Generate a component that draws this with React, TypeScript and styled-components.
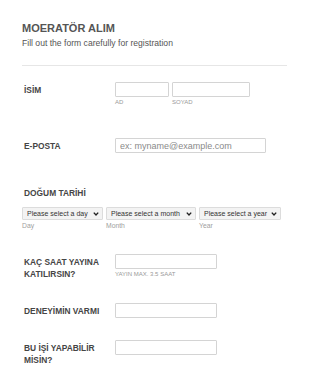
import React from 'react'
import styled, { createGlobalStyle } from 'styled-components'

const GlobalStyle = createGlobalStyle`
  html, body {
    margin: 0;
    padding: 0;
    background: #ffffff;
  }
  body {
    font-family: 'Liberation Sans', Arial, sans-serif;
  }
`

const Page = styled.div`
  display: flex;
  flex-direction: column;
  padding: 21px 0 0 22px;
  width: 288px;
  box-sizing: border-box;
`

const Header = styled.div`
  display: flex;
  flex-direction: column;
  width: 265px;
  padding-bottom: 16px;
  border-bottom: 1px solid #e6e6e6;
`

const Title = styled.div`
  font-size: 11px;
  font-weight: 700;
  line-height: 14px;
  color: #555555;
`

const Subtitle = styled.div`
  margin-top: 2px;
  font-size: 8.6px;
  line-height: 12px;
  color: #555555;
`

const Row = styled.div<{ $top: number }>`
  display: flex;
  flex-direction: row;
  align-items: flex-start;
  margin-top: ${p => p.$top}px;
`

const Stack = styled.div<{ $top: number }>`
  display: flex;
  flex-direction: column;
  margin-top: ${p => p.$top}px;
`

const Label = styled.div`
  width: 93px;
  padding-left: 2px;
  padding-top: 3px;
  box-sizing: border-box;
  font-size: 8.4px;
  font-weight: 700;
  line-height: 11.5px;
  color: #454545;
`

const FieldGroup = styled.div`
  display: flex;
  flex-direction: row;
  gap: 3px;
`

const Field = styled.div`
  display: flex;
  flex-direction: column;
`

const TextInput = styled.input<{ $w: number }>`
  display: block;
  width: ${p => p.$w}px;
  height: 15px;
  box-sizing: border-box;
  margin: 0;
  padding: 0 4px;
  border: 1px solid #d4d4d4;
  border-radius: 1px;
  background: #ffffff;
  font-family: 'Liberation Sans', Arial, sans-serif;
  font-size: 9px;
  color: #555555;
  outline: none;
  &::placeholder {
    color: #8a8a8a;
  }
`

const SubLabel = styled.div`
  margin-top: 2px;
  font-size: 6px;
  line-height: 7px;
  color: #999999;
`

const SelectWrap = styled.div<{ $w: number }>`
  position: relative;
  width: ${p => p.$w}px;
  height: 13px;
`

const Select = styled.select`
  display: block;
  appearance: none;
  -webkit-appearance: none;
  width: 100%;
  height: 13px;
  box-sizing: border-box;
  margin: 0;
  padding: 0 0 0 4px;
  border: 1px solid #dcdcdc;
  border-radius: 1px;
  background: #f3f3f3;
  font-family: 'Liberation Sans', Arial, sans-serif;
  font-size: 7px;
  line-height: 11px;
  color: #333333;
  outline: none;
`

const Chevron = styled.svg`
  position: absolute;
  right: 4px;
  top: 50%;
  transform: translateY(-50%);
  width: 6px;
  height: 5px;
  pointer-events: none;
`

const DateLabel = styled.div`
  padding-left: 2px;
  font-size: 8.4px;
  font-weight: 700;
  line-height: 10px;
  color: #454545;
`

const DateRow = styled.div`
  display: flex;
  flex-direction: row;
  gap: 3px;
  margin-top: 9px;
`

const DateSub = styled.div`
  margin-top: 2px;
  font-size: 6.8px;
  line-height: 8px;
  color: #a0a0a0;
`

const selects = [
  { w: 81, text: 'Please select a day', sub: 'Day' },
  { w: 90, text: 'Please select a month', sub: 'Month' },
  { w: 82, text: 'Please select a year', sub: 'Year' },
]

const App: React.FC = () => {
  return (
    <>
      <GlobalStyle />
      <Page>
        <Header>
          <Title>MOERATÖR ALIM</Title>
          <Subtitle>Fill out the form carefully for registration</Subtitle>
        </Header>

        <Row $top={16}>
          <Label>İSİM</Label>
          <FieldGroup>
            <Field>
              <TextInput $w={54} />
              <SubLabel>AD</SubLabel>
            </Field>
            <Field>
              <TextInput $w={78} />
              <SubLabel>SOYAD</SubLabel>
            </Field>
          </FieldGroup>
        </Row>

        <Row $top={32}>
          <Label>E-POSTA</Label>
          <TextInput $w={151} placeholder="ex: myname@example.com" />
        </Row>

        <Stack $top={35}>
          <DateLabel>DOĞUM TARİHİ</DateLabel>
          <DateRow>
            {selects.map(s => (
              <Field key={s.sub}>
                <SelectWrap $w={s.w}>
                  <Select defaultValue="">
                    <option value="">{s.text}</option>
                  </Select>
                  <Chevron viewBox="0 0 6 5">
                    <path d="M0.8 1.1 L3 3.5 L5.2 1.1" fill="none" stroke="#222" strokeWidth="1.4" />
                  </Chevron>
                </SelectWrap>
                <DateSub>{s.sub}</DateSub>
              </Field>
            ))}
          </DateRow>
        </Stack>

        <Row $top={24}>
          <Label>KAÇ SAAT YAYINA KATILIRSIN?</Label>
          <Field>
            <TextInput $w={102} />
            <SubLabel>YAYIN MAX. 3.5 SAAT</SubLabel>
          </Field>
        </Row>

        <Row $top={23}>
          <Label>DENEYİMİN VARMI</Label>
          <TextInput $w={102} />
        </Row>

        <Row $top={22}>
          <Label>BU İŞİ YAPABİLİR MİSİN?</Label>
          <TextInput $w={102} />
        </Row>
      </Page>
    </>
  )
}

export default App
